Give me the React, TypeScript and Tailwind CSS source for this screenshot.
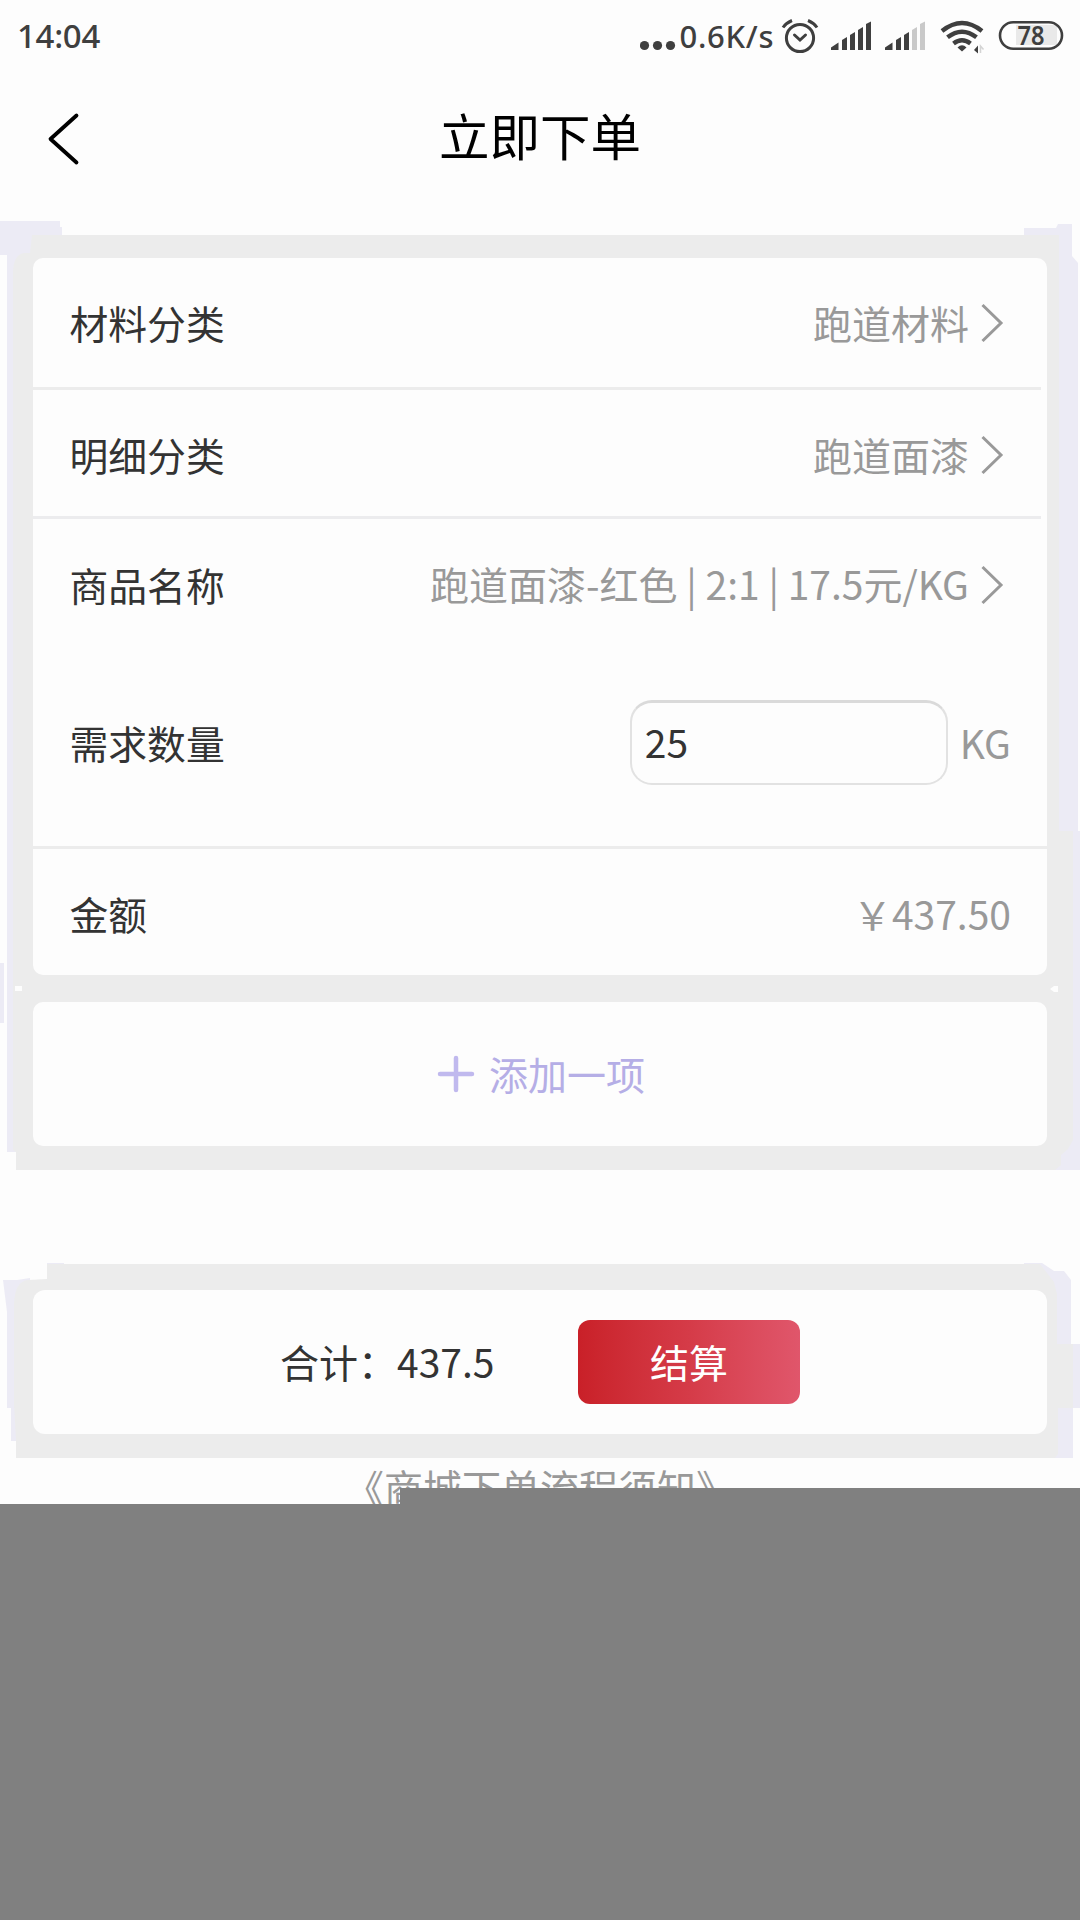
import React from 'react';

const Chevron = () => (
  <svg className="ml-[11px] h-10 w-6 shrink-0" viewBox="0 0 24 40" fill="none" stroke="#999" strokeWidth="3">
    <path d="M2.5 2 L21 20 L2.5 38" />
  </svg>
);

type RowProps = { label: string; className: string; children: React.ReactNode };

const Row = ({ label, className, children }: RowProps) => (
  <div className={`flex items-center justify-between pl-[36.5px] ${className}`}>
    <span className="pb-px text-[38.8px] text-[#333]">{label}</span>
    <div className="flex items-center text-[#999]">{children}</div>
  </div>
);

const StatusBar = () => (
  <header className="flex h-[72px] items-center justify-between pl-[17px] font-['Noto_Sans'] font-medium text-[#3f3f3f]">
    <span className="text-[33px] leading-[72px] tracking-[-0.3px]">14:04</span>
    <svg className="h-[72px] w-[440px]" viewBox="640 0 440 72" fill="none">
      <g fill="#3f3f3f">
        <circle cx="644.5" cy="45.5" r="4.6" />
        <circle cx="657.5" cy="45.5" r="4.6" />
        <circle cx="670.5" cy="45.5" r="4.6" />
        <text x="679.5" y="47.5" fontSize="31" textLength="94">0.6K/s</text>
      </g>
      <g stroke="#3f3f3f" strokeWidth="3">
        <circle cx="800" cy="38" r="13.6" />
        <path d="M794.5 35 L800 40 L805.5 35" strokeLinecap="round" />
        <path d="M783 27.5 Q786 23 792 20.5 M817 27.5 Q814 23 808 20.5" />
      </g>
      <g fill="#3f3f3f">
        <path d="M831 50 V47.5 L838.5 42.5 V50Z" />
        <path d="M842 50 V40 L847 37 V50Z" />
        <path d="M850 50 V35 L855 32 V50Z" />
        <path d="M858 50 V30 L863 27 V50Z" />
        <path d="M866 50 V24 L871 21.5 V50Z" />
        <path d="M885 50 V47.5 L892.5 42.5 V50Z" />
        <path d="M896 50 V40 L901 37 V50Z" />
        <path d="M904 50 V35 L909 32 V50Z" />
      </g>
      <g fill="#c9c9c9">
        <path d="M912 50 V30 L917 27 V50Z" />
        <path d="M920 50 V24 L925 21.5 V50Z" />
      </g>
      <g stroke="#3f3f3f" strokeWidth="4.4">
        <path d="M942 31 Q962 15 982 31" />
        <path d="M947.5 37.3 Q962 26 976.5 37.3" />
        <path d="M953.5 43.5 Q962 37 970.5 43.5" />
      </g>
      <path d="M957.5 47.5 Q962 43 966.5 47.5 L962 51.5Z" fill="#3f3f3f" />
      <path d="M978 45.5 V53.5 L974 50Z" fill="#3f3f3f" />
      <path d="M980.5 53 V46 L983.5 49.5" stroke="#d4d4d4" strokeWidth="1.5" />
      <rect x="1016" y="25" width="41" height="20" fill="#e9e9e9" />
      <rect x="1000" y="22.2" width="62" height="26.5" rx="13.2" stroke="#3f3f3f" strokeWidth="2.6" />
      <text x="1017.5" y="44.8" fontSize="26.5" fontWeight="600" textLength="27" lengthAdjust="spacingAndGlyphs" fill="#3f3f3f">78</text>
    </svg>
  </header>
);

const FormHalo = () => (
  <svg className="absolute inset-x-0 -top-4 h-[952px] w-[1080px]" viewBox="0 -16 1080 952">
    <g fill="#ecebf5">
      <path d="M0 -14 H60 V-8 H62 V2 H40 V917 H7 V20 H0Z" />
      <path d="M0 728 H4 V788 H0Z" />
      <path d="M1024 -7 H1056 L1058 -11 H1072 V21 L1078 28 V596 H1080 V935 H1024Z" />
    </g>
    <path
      d="M32 0 H1059 V596 H1073 V905 L1068 914 L1061 920 V930 L1055 935 H16 V917 L13 915 V36 Q14 19 24 18 H30Z"
      fill="#ececec"
    />
    <path d="M1050 754 L1054 751 H1058 V757 H1054Z M15 751 H22 V756 H15Z" fill="#fdfdfd" />
  </svg>
);

const TotalHalo = () => (
  <svg className="absolute inset-x-0 -top-1 h-[200px] w-[1080px]" viewBox="0 -4 1080 200">
    <g fill="#ecebf5">
      <path d="M3 16 H17 L30 14 V190 H16 V177 H11 V144 H7 V48Z" />
      <path d="M47 -1 H64 V20 H47Z" />
      <path d="M1024 -1 H1042 L1054 7 H1064 L1071 16 V80 H1080 V144 H1073 V194 H1024Z" />
    </g>
    <path
      d="M47 0 H1040 L1054 18 L1057 30 V80 H1073 V144 H1058 V190 L1055 194 H16 V175 L14 140 V40 Q15 17 28 16 L47 15Z"
      fill="#ececec"
    />
  </svg>
);

export default function App() {
  return (
    <div className="flex h-[1920px] w-[1080px] flex-col overflow-hidden bg-[#fdfdfd] font-['Noto_Sans_CJK_SC',sans-serif] text-[39px] leading-[56px] whitespace-nowrap">
      <StatusBar />

      <nav className="grid h-[163px] grid-cols-[120px_1fr_120px] items-start pt-[33px]">
        <svg className="mt-[5px] ml-[46px] h-14 w-9" viewBox="0 0 36 56" fill="none" stroke="#000" strokeWidth="3.8" strokeLinecap="round" strokeLinejoin="round">
          <path d="M30.5 5.5 L4.5 29 L30.5 52.5" />
        </svg>
        <h1 className="pt-px text-center text-[50.5px] leading-[56px] text-black">立即下单</h1>
      </nav>

      <section className="relative h-[935px] px-[33px] pt-[23px]">
        <FormHalo />
        <div className="relative flex flex-col gap-[27px]">
          <div className="h-[717px] rounded-[10px] bg-[#fdfdfd]">
            <Row label="材料分类" className="h-[129px] pr-[43px]">
              <span className="pb-px">跑道材料</span>
              <Chevron />
            </Row>
            <div className="mr-[6px] h-[3px] bg-[#ececec]" />
            <Row label="明细分类" className="h-[126px] pt-[3px] pr-[43px]">
              <span className="pb-px">跑道面漆</span>
              <Chevron />
            </Row>
            <div className="mr-[6px] h-[3px] bg-[#ececee]" />
            <Row label="商品名称" className="h-[131px] pr-[43px]">
              <span className="pb-[3px]">跑道面漆-红色 | 2:1 | 17.5元/KG</span>
              <Chevron />
            </Row>
            <Row label="需求数量" className="h-[196px] pr-[36px] pb-[11px]">
              <div className="mr-[12px] flex h-[85px] w-[318px] items-center rounded-[22px] border-2 border-t-[3px] border-[#e2e2e2] border-t-[#dadada] pb-[4px] pl-[13px] text-[#333]">25</div>
              <span className="pb-px">KG</span>
            </Row>
            <div className="h-[3px] bg-[#ececec]" />
            <Row label="金额" className="h-[126px] pt-[3px] pr-[36px]">
              <span className="pb-px">￥437.50</span>
            </Row>
          </div>
          <div className="flex h-[144px] items-center justify-center rounded-[10px] bg-[#fdfdfd] pl-[2px] text-[#b5aee6]">
            <svg className="mr-[14px] h-[38px] w-[38px]" viewBox="0 0 38 38" stroke="#c0b9ee" strokeWidth="4.5" strokeLinecap="round">
              <path d="M19 3 V35 M3 19 H35" />
            </svg>
            <span className="pb-[3px]">添加一项</span>
          </div>
        </div>
      </section>

      <section className="relative mt-[94px] h-[194px] px-[33px] pt-[26px]">
        <TotalHalo />
        <div className="relative flex h-[144px] items-center rounded-[12px] bg-[#fdfdfd] pl-[247px]">
          <span className="w-[298px] pb-[3px] text-[#333]">合计：437.5</span>
          <button className="h-[84px] w-[222px] rounded-[12px] bg-linear-to-r from-[#c92028] via-[#d53b48] to-[#e0566b] pb-[3px] text-white">结算</button>
        </div>
      </section>

      <div className="relative h-[46px] text-center text-[#999]">
        <p>《商城下单流程须知》</p>
        <div className="absolute right-0 bottom-0 left-[400px] h-[16px] bg-[#808080]" />
      </div>
      <footer className="relative flex-1 bg-[#808080]" />
    </div>
  );
}
